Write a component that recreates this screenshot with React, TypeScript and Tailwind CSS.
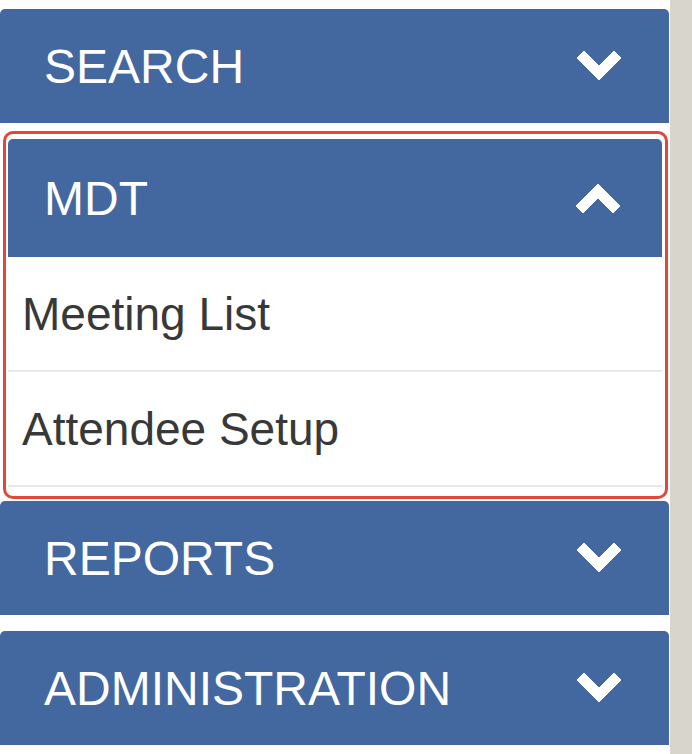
import type { ReactNode } from "react";

const font = { fontFamily: '"Liberation Sans", Arial, sans-serif' };

function Chevron({ up = false }: { up?: boolean }) {
  return (
    <svg width="44" height="30" viewBox="0 0 44 30" aria-hidden="true">
      <polygon
        points={up ? "0,23 7,30 22,15 37,30 44,23 22,1" : "0,7 7,0 22,15 37,0 44,7 22,29"}
        fill="#ffffff"
        strokeLinejoin="round"
        stroke="#ffffff"
        strokeWidth="1"
      />
    </svg>
  );
}

function Header({ title, open = false, className = "" }: { title: string; open?: boolean; className?: string }) {
  return (
    <div
      className={`flex items-center justify-between rounded-t-[5px] bg-[#43679f] text-[48px] leading-none text-white ${className}`}
    >
      <span className="pt-[2px]">{title}</span>
      <Chevron up={open} />
    </div>
  );
}

function Row({ children }: { children: ReactNode }) {
  return (
    <div className="flex h-[115px] items-center border-b-2 border-[#e8e8e8] bg-white pl-[14px] text-[46px] leading-none text-[#383838]">
      {children}
    </div>
  );
}

export default function App() {
  return (
    <div className="flex h-[754px] w-[692px] bg-white" style={font}>
      <div className="flex flex-1 flex-col pt-[9px]">
        <Header title="SEARCH" className="h-[114px] w-[669px] pr-[48px] pl-[44px]" />

        {/* highlighted section */}
        <div className="mt-[8px] ml-[3px] h-[368px] w-[665px] rounded-[10px] border-[3px] border-[#e0483a] pt-[5px] pr-[3px] pl-[2px]">
          <Header title="MDT" open className="h-[118px] pr-[42px] pl-[36px]" />
          <Row>Meeting List</Row>
          <Row>Attendee Setup</Row>
        </div>

        <Header title="REPORTS" className="mt-[2px] h-[114px] w-[669px] pr-[48px] pl-[44px]" />
        <Header title="ADMINISTRATION" className="mt-[16px] h-[114px] w-[669px] pr-[48px] pl-[44px]" />
      </div>
      <div className="w-[22px] bg-[#d8d5cc]" />
    </div>
  );
}
